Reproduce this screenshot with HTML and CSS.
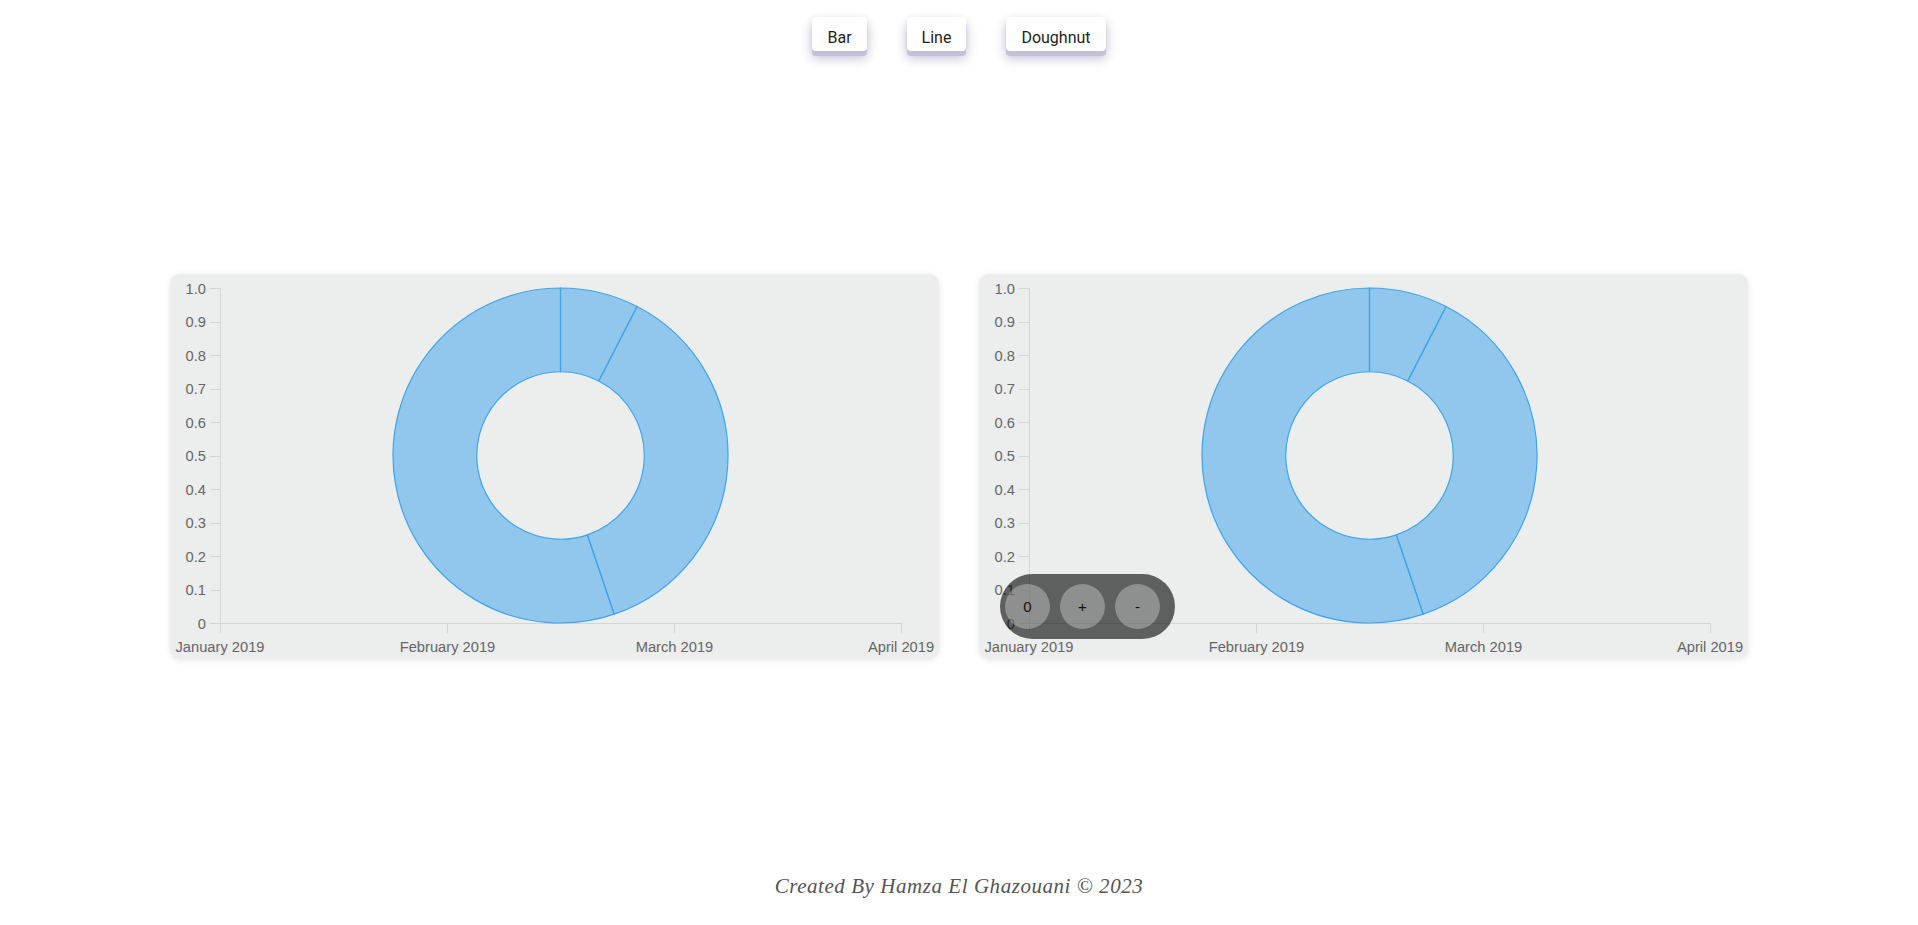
FILE: index.html
```html
<!DOCTYPE html>
<html lang="en">
<head>
<meta charset="utf-8">
<title>Charts</title>
<link rel="stylesheet" href="styles.css">
</head>
<body>
<div class="toolbar">
  <button class="btn">Bar</button>
  <button class="btn">Line</button>
  <button class="btn">Doughnut</button>
</div>

<div class="charts">
  <div class="card">
    <svg class="chart" width="769" height="385" viewBox="0 0 769 385">
      <g class="grid">
        <line x1="50.5" y1="14" x2="50.5" y2="359"/>
        <line x1="40" y1="349.5" x2="731" y2="349.5"/>
        <line x1="40" y1="14.5" x2="50" y2="14.5"/>
        <line x1="40" y1="48.5" x2="50" y2="48.5"/>
        <line x1="40" y1="81.5" x2="50" y2="81.5"/>
        <line x1="40" y1="115.5" x2="50" y2="115.5"/>
        <line x1="40" y1="148.5" x2="50" y2="148.5"/>
        <line x1="40" y1="182.5" x2="50" y2="182.5"/>
        <line x1="40" y1="215.5" x2="50" y2="215.5"/>
        <line x1="40" y1="249.5" x2="50" y2="249.5"/>
        <line x1="40" y1="282.5" x2="50" y2="282.5"/>
        <line x1="40" y1="316.5" x2="50" y2="316.5"/>
        <line x1="277.5" y1="349" x2="277.5" y2="359"/>
        <line x1="504.5" y1="349" x2="504.5" y2="359"/>
        <line x1="731.5" y1="349" x2="731.5" y2="359"/>
      </g>
      <g class="ylabels">
        <text x="36" y="19.5">1.0</text>
        <text x="36" y="53">0.9</text>
        <text x="36" y="86.5">0.8</text>
        <text x="36" y="120">0.7</text>
        <text x="36" y="153.5">0.6</text>
        <text x="36" y="187">0.5</text>
        <text x="36" y="220.5">0.4</text>
        <text x="36" y="254">0.3</text>
        <text x="36" y="287.5">0.2</text>
        <text x="36" y="321">0.1</text>
        <text x="36" y="354.5">0</text>
      </g>
      <g class="xlabels">
        <text x="50" y="377.5">January 2019</text>
        <text x="277.5" y="377.5">February 2019</text>
        <text x="504.5" y="377.5">March 2019</text>
        <text x="731" y="377.5">April 2019</text>
      </g>
      <g class="donut">
        <path d="M 390.5 14 A 167.5 167.5 0 0 1 467.06 32.53 L 428.78 107.01 A 83.75 83.75 0 0 0 390.5 97.75 Z"/>
        <path d="M 467.06 32.53 A 167.5 167.5 0 0 1 444.2 340.16 L 417.35 260.83 A 83.75 83.75 0 0 0 428.78 107.01 Z"/>
        <path d="M 444.2 340.16 A 167.5 167.5 0 1 1 390.5 14 L 390.5 97.75 A 83.75 83.75 0 1 0 417.35 260.83 Z"/>
      </g>
    </svg>
  </div>

  <div class="card">
    <svg class="chart" width="769" height="385" viewBox="0 0 769 385">
      <g class="grid">
        <line x1="50.5" y1="14" x2="50.5" y2="359"/>
        <line x1="40" y1="349.5" x2="731" y2="349.5"/>
        <line x1="40" y1="14.5" x2="50" y2="14.5"/>
        <line x1="40" y1="48.5" x2="50" y2="48.5"/>
        <line x1="40" y1="81.5" x2="50" y2="81.5"/>
        <line x1="40" y1="115.5" x2="50" y2="115.5"/>
        <line x1="40" y1="148.5" x2="50" y2="148.5"/>
        <line x1="40" y1="182.5" x2="50" y2="182.5"/>
        <line x1="40" y1="215.5" x2="50" y2="215.5"/>
        <line x1="40" y1="249.5" x2="50" y2="249.5"/>
        <line x1="40" y1="282.5" x2="50" y2="282.5"/>
        <line x1="40" y1="316.5" x2="50" y2="316.5"/>
        <line x1="277.5" y1="349" x2="277.5" y2="359"/>
        <line x1="504.5" y1="349" x2="504.5" y2="359"/>
        <line x1="731.5" y1="349" x2="731.5" y2="359"/>
      </g>
      <g class="ylabels">
        <text x="36" y="19.5">1.0</text>
        <text x="36" y="53">0.9</text>
        <text x="36" y="86.5">0.8</text>
        <text x="36" y="120">0.7</text>
        <text x="36" y="153.5">0.6</text>
        <text x="36" y="187">0.5</text>
        <text x="36" y="220.5">0.4</text>
        <text x="36" y="254">0.3</text>
        <text x="36" y="287.5">0.2</text>
        <text x="36" y="321">0.1</text>
        <text x="36" y="354.5">0</text>
      </g>
      <g class="xlabels">
        <text x="50" y="377.5">January 2019</text>
        <text x="277.5" y="377.5">February 2019</text>
        <text x="504.5" y="377.5">March 2019</text>
        <text x="731" y="377.5">April 2019</text>
      </g>
      <g class="donut">
        <path d="M 390.5 14 A 167.5 167.5 0 0 1 467.06 32.53 L 428.78 107.01 A 83.75 83.75 0 0 0 390.5 97.75 Z"/>
        <path d="M 467.06 32.53 A 167.5 167.5 0 0 1 444.2 340.16 L 417.35 260.83 A 83.75 83.75 0 0 0 428.78 107.01 Z"/>
        <path d="M 444.2 340.16 A 167.5 167.5 0 1 1 390.5 14 L 390.5 97.75 A 83.75 83.75 0 1 0 417.35 260.83 Z"/>
      </g>
    </svg>
    <div class="zoom-ctrl">
      <span class="zbtn">0</span>
      <span class="zbtn">+</span>
      <span class="zbtn">-</span>
    </div>
  </div>
</div>

<footer class="footer">Created By Hamza El Ghazouani © 2023</footer>
</body>
</html>
```

FILE: styles.css
```css
html, body {
  margin: 0;
  padding: 0;
  background: #ffffff;
}

body {
  font-family: Roboto, "Liberation Sans", sans-serif;
  width: 1918px;
  height: 925px;
  overflow: hidden;
}

.toolbar {
  display: flex;
  justify-content: center;
  align-items: flex-start;
  gap: 40px;
  padding-top: 17px;
  height: 34px;
}

.btn {
  box-sizing: border-box;
  font-family: Roboto, sans-serif;
  font-size: 16px;
  color: #1e1e1e;
  background: #ffffff;
  border: none;
  border-radius: 4px;
  height: 34px;
  padding: 10px 15px 2px;
  line-height: 22px;
  box-shadow: 0 5px 0 #c4c0da, 0 7px 12px rgba(50, 40, 100, 0.3), 0 0 6px rgba(0, 0, 0, 0.06);
  cursor: pointer;
}

.charts {
  display: flex;
  justify-content: center;
  gap: 40px;
  margin-top: 223px;
}

.card {
  position: relative;
  width: 769px;
  height: 385px;
  background: #eceded;
  border-radius: 10px;
  box-shadow: 0 1px 6px rgba(0, 0, 0, 0.1);
}

.chart {
  display: block;
}

.grid line {
  stroke: #d4d5d4;
  stroke-width: 1;
}

.ylabels text {
  font-family: "Liberation Sans", Arial, sans-serif;
  font-size: 14.7px;
  fill: #666666;
  text-anchor: end;
}

.xlabels text {
  font-family: "Liberation Sans", Arial, sans-serif;
  font-size: 14.7px;
  fill: #666666;
  text-anchor: middle;
}

.donut path {
  fill: rgba(54, 162, 235, 0.5);
  stroke: #3fa5ea;
  stroke-width: 1.2;
}

.zoom-ctrl {
  position: absolute;
  left: 21px;
  top: 300px;
  display: flex;
  gap: 10px;
  padding: 10px 15px 10px 5px;
  background: rgba(0, 0, 0, 0.6);
  border-radius: 33px;
}

.zbtn {
  width: 45px;
  height: 45px;
  border-radius: 50%;
  background: rgba(255, 255, 255, 0.3);
  display: flex;
  align-items: center;
  justify-content: center;
  font-family: "Liberation Sans", Arial, sans-serif;
  font-size: 15px;
  color: #111;
}

.footer {
  margin-top: 214px;
  text-align: center;
  font-family: "Liberation Serif", "DejaVu Serif", serif;
  font-style: italic;
  font-size: 21px;
  letter-spacing: 0.55px;
  line-height: 26px;
  color: #555555;
}
```
